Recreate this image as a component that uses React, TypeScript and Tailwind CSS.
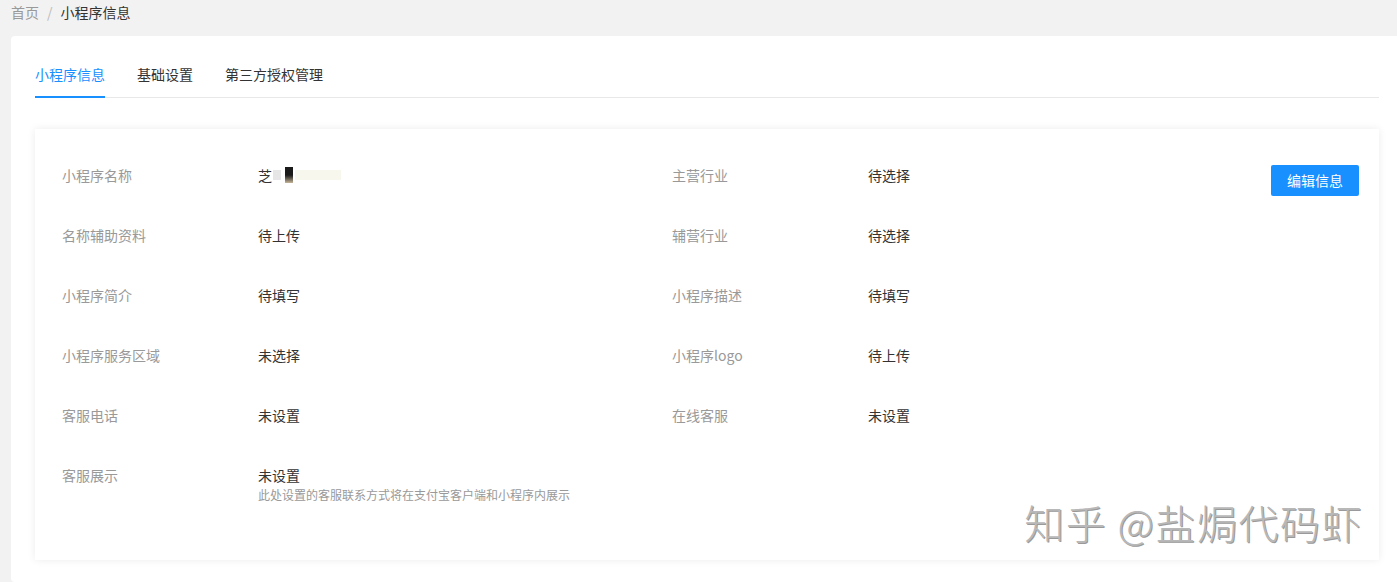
import React from 'react';

const font = { fontFamily: '"Noto Sans CJK SC", "Noto Sans", sans-serif' };

const rows: { left: [string, React.ReactNode]; right?: [string, string]; hint?: string }[] = [
  {
    left: [
      '小程序名称',
      <span className="inline-flex items-center">
        芝
        <span className="ml-[1px] inline-block h-[10px] w-[8px] bg-[#e6e6e6]" />
        <span className="ml-[4px] inline-block h-[16px] w-[8px] bg-gradient-to-b from-[#1a1a1a] via-[#1a1a1a] to-[#c9b79a]" />
        <span className="ml-[2px] inline-block h-[10px] w-[46px] bg-[#f7f7ee]" />
      </span>,
    ],
    right: ['主营行业', '待选择'],
  },
  { left: ['名称辅助资料', '待上传'], right: ['辅营行业', '待选择'] },
  { left: ['小程序简介', '待填写'], right: ['小程序描述', '待填写'] },
  { left: ['小程序服务区域', '未选择'], right: ['小程序logo', '待上传'] },
  { left: ['客服电话', '未设置'], right: ['在线客服', '未设置'] },
  { left: ['客服展示', '未设置'], hint: '此处设置的客服联系方式将在支付宝客户端和小程序内展示' },
];

const tabs = ['小程序信息', '基础设置', '第三方授权管理'];

export default function App() {
  return (
    <div className="min-h-screen bg-[#f2f2f2] pl-[11px] text-[14px] text-[#333]" style={font}>
      <div className="flex h-[36px] items-start pt-[2px] leading-[20px]">
        <span className="text-[#999]">首页</span>
        <span className="mx-[8px] text-[#bbb]">/</span>
        <span className="text-[#333]">小程序信息</span>
      </div>

      <div className="min-h-[546px] rounded-l-[4px] bg-white pl-[24px] pr-[18px] pt-[27px]">
        <div className="flex gap-[32px] border-b border-[#e8e8e8]">
          {tabs.map((t, i) => (
            <div
              key={t}
              className={`-mb-px pb-[11px] leading-[22px] ${
                i === 0 ? 'border-b-2 border-[#1890ff] text-[#1890ff]' : 'border-b-2 border-transparent text-[#333]'
              }`}
            >
              {t}
            </div>
          ))}
        </div>

        <div className="relative mt-[31px] flex h-[431px] bg-white pl-[27px] pr-[20px] pt-[36px] shadow-[0_0_8px_rgba(0,0,0,0.08)]">
          <div className="flex flex-col">
            {rows.map((r, i) => (
              <div key={i} className="flex h-[60px] leading-[20px]">
                <div className="flex w-[610px]">
                  <div className="w-[196px] text-[#999]">{r.left[0]}</div>
                  <div>
                    <div className="text-[#333]">{r.left[1]}</div>
                    {r.hint && <div className="mt-[2px] text-[12px] leading-[16px] text-[#999]">{r.hint}</div>}
                  </div>
                </div>
                {r.right && (
                  <div className="flex w-[400px]">
                    <div className="w-[196px] text-[#999]">{r.right[0]}</div>
                    <div className="text-[#333]">{r.right[1]}</div>
                  </div>
                )}
              </div>
            ))}
          </div>
          <div className="ml-auto">
            <button className="h-[31px] w-[88px] rounded-[2px] bg-[#1890ff] text-[14px] text-white">编辑信息</button>
          </div>

          <div
            className="absolute bottom-[15px] right-[16px] text-[40px] font-light leading-[46px] tracking-[1.5px] text-[#b8b8b8]"
            style={{ textShadow: '1px 1px 0 #9a9a9a' }}
          >
            知乎 @盐焗代码虾
          </div>
        </div>
      </div>
    </div>
  );
}
